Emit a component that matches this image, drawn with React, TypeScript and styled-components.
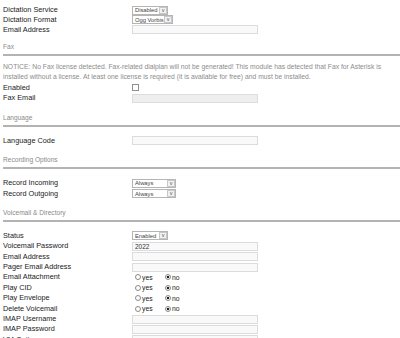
import React from "react";
import styled, { createGlobalStyle } from "styled-components";

const Global = createGlobalStyle`
  html, body { margin: 0; padding: 0; background: #fff; }
  body { font-family: "Liberation Sans", Arial, sans-serif; overflow: hidden; }
`;

const Page = styled.div`
  padding: 5.2px 0 0 3px;
  width: 397px;
`;

const Row = styled.div<{ $tight?: boolean }>`
  display: grid;
  grid-template-columns: 129px 126px;
  align-items: center;
  height: ${(p) => (p.$tight ? "9.7px" : "10.4px")};
`;

const Label = styled.div`
  font-size: 7.3px;
  color: #1a1a1a;
  white-space: nowrap;
  line-height: 10px;
`;

const TextInput = styled.div<{ $filled?: boolean }>`
  box-sizing: border-box;
  height: 9px;
  width: 126px;
  border: 1px solid #dcdcdc;
  background: ${(p) => (p.$filled ? "#eeeeee" : "#f9f9f9")};
  font-size: 6.5px;
  line-height: 7px;
  padding-left: 2px;
  color: #333;
`;

const SelectBox = styled.div<{ $w: number }>`
  box-sizing: border-box;
  display: flex;
  align-items: center;
  justify-content: space-between;
  height: 9px;
  width: ${(p) => p.$w}px;
  border: 1px solid #b5b5b5;
  background: #fff;
  font-size: 5.8px;
  color: #444;
  padding-left: 2px;
`;

const Arrow = styled.div`
  box-sizing: border-box;
  height: 7px;
  width: 8px;
  border: 1px solid #c8c8c8;
  background: #f2f2f2;
  font-size: 5.5px;
  line-height: 4px;
  text-align: center;
  color: #555;
`;

const Section = styled.div<{ $top?: number }>`
  font-size: 6.6px;
  color: #8a8a8a;
  line-height: 8px;
  padding-top: ${(p) => p.$top ?? 10.5}px;
  padding-bottom: 2.5px;
  border-bottom: 2px solid #b3b3b3;
  margin-bottom: 9px;
`;

const Notice = styled.div`
  font-size: 6.75px;
  line-height: 9.5px;
  color: #8c8c8c;
  margin-top: -2.5px;
  margin-bottom: 1.5px;
  padding-right: 8px;
`;

const Check = styled.div`
  box-sizing: border-box;
  width: 7px;
  height: 7px;
  border: 1px solid #8f8f8f;
  background: #fff;
`;

const Radios = styled.div`
  display: flex;
  align-items: center;
  font-size: 6.8px;
  color: #222;
  padding-left: 3px;
`;

const RadioOpt = styled.label`
  display: inline-flex;
  align-items: center;
  gap: 1px;
  width: 30px;
`;

const Dot = styled.span<{ $on?: boolean }>`
  box-sizing: border-box;
  display: inline-block;
  width: 6px;
  height: 6px;
  border-radius: 50%;
  border: 1px solid #8a8a8a;
  background: ${(p) => (p.$on ? "radial-gradient(circle, #222 0 1.4px, #fff 1.6px)" : "#fff")};
`;

const Select = ({ text, w }: { text: string; w: number }) => (
  <SelectBox $w={w}>
    <span>{text}</span>
    <Arrow>v</Arrow>
  </SelectBox>
);

const YesNo = () => (
  <Radios>
    <RadioOpt>
      <Dot />
      yes
    </RadioOpt>
    <RadioOpt>
      <Dot $on />
      no
    </RadioOpt>
  </Radios>
);

export default function App() {
  return (
    <Page>
      <Global />
      <Row $tight>
        <Label>Dictation Service</Label>
        <div><Select text="Disabled" w={36} /></div>
      </Row>
      <Row $tight>
        <Label>Dictation Format</Label>
        <div><Select text="Ogg Vorbis" w={41} /></div>
      </Row>
      <Row $tight>
        <Label>Email Address</Label>
        <TextInput />
      </Row>

      <Section $top={9}>Fax</Section>
      <Notice>
        NOTICE: No Fax license detected. Fax-related dialplan will not be generated! This module has detected that Fax for Asterisk is installed without a license. At least one license is required (it is available for free) and must be installed.
      </Notice>
      <Row>
        <Label>Enabled</Label>
        <Check />
      </Row>
      <Row>
        <Label>Fax Email</Label>
        <TextInput $filled />
      </Row>

      <Section>Language</Section>
      <Row>
        <Label>Language Code</Label>
        <TextInput />
      </Row>

      <Section>Recording Options</Section>
      <Row>
        <Label>Record Incoming</Label>
        <div><Select text="Always" w={44} /></div>
      </Row>
      <Row>
        <Label>Record Outgoing</Label>
        <div><Select text="Always" w={44} /></div>
      </Row>

      <Section>Voicemail &amp; Directory</Section>
      <Row>
        <Label>Status</Label>
        <div><Select text="Enabled" w={36} /></div>
      </Row>
      <Row>
        <Label>Voicemail Password</Label>
        <TextInput>2022</TextInput>
      </Row>
      <Row>
        <Label>Email Address</Label>
        <TextInput />
      </Row>
      <Row>
        <Label>Pager Email Address</Label>
        <TextInput />
      </Row>
      <Row>
        <Label>Email Attachment</Label>
        <YesNo />
      </Row>
      <Row>
        <Label>Play CID</Label>
        <YesNo />
      </Row>
      <Row>
        <Label>Play Envelope</Label>
        <YesNo />
      </Row>
      <Row>
        <Label>Delete Voicemail</Label>
        <YesNo />
      </Row>
      <Row>
        <Label>IMAP Username</Label>
        <TextInput />
      </Row>
      <Row>
        <Label>IMAP Password</Label>
        <TextInput />
      </Row>
      <Row>
        <Label>VM Options</Label>
        <TextInput />
      </Row>
    </Page>
  );
}
